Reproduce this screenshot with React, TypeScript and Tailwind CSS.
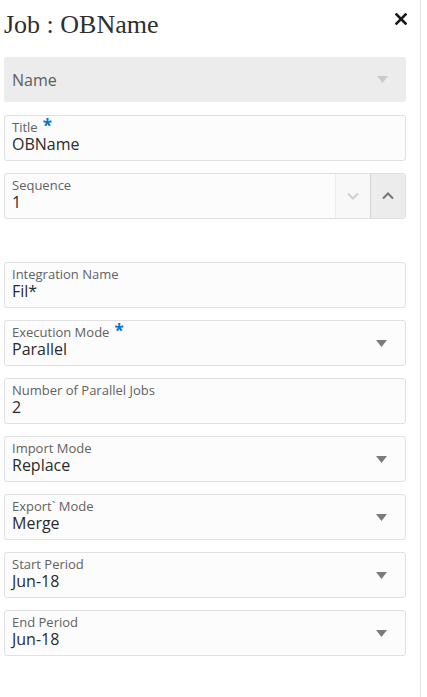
import React from "react";

const sans = { fontFamily: '"Open Sans", "Noto Sans", sans-serif' };

function Caret({ light }: { light?: boolean }) {
  return (
    <svg width="11" height="7" viewBox="0 0 11 7" className="shrink-0">
      <polygon points="0,0 11,0 5.5,7" fill={light ? "#c9c9c9" : "#7b7b7b"} />
    </svg>
  );
}

function Star() {
  return (
    <span className="ml-[5px] inline-block align-top text-[17px] font-bold leading-[11px] text-[#0572ce]">*</span>
  );
}

function Field({
  label,
  value,
  required,
  select,
}: {
  label: string;
  value: string;
  required?: boolean;
  select?: boolean;
}) {
  return (
    <div className="flex h-[46px] items-stretch rounded-[3px] border border-[#e0e0e0] bg-[#fcfcfc]">
      <div className="flex min-w-0 flex-1 flex-col pl-[7px] pt-[4px]">
        <div className="text-[13px] leading-[14px] text-[#626262]">
          {label}
          {required && <Star />}
        </div>
        <div className="text-[16px] leading-[20px] text-[#2b2b2b]">{value}</div>
      </div>
      {select && (
        <div className="flex w-[50px] items-center justify-center pl-[2px]">
          <Caret />
        </div>
      )}
    </div>
  );
}

export default function App() {
  return (
    <div className="flex min-h-[697px] w-[427px] bg-white" style={sans}>
      <div className="w-[421px] border-r border-[#e3e3e3] pb-[40px] pl-[4px] pr-[14px] pt-[10px]">
        <div className="flex items-start justify-between">
          <h1
            className="text-[26px] leading-[30px] text-[#2e2e2e]"
            style={{ fontFamily: '"Liberation Serif", "Times New Roman", serif' }}
          >
            Job : OBName
          </h1>
          <svg width="12" height="12" viewBox="0 0 12 12" className="mr-[-1px] mt-[3px]">
            <path d="M1.5 1.5 L10.5 10.5 M10.5 1.5 L1.5 10.5" stroke="#1a1a1a" strokeWidth="2.6" strokeLinecap="square" />
          </svg>
        </div>

        <div className="mt-[17px] flex flex-col gap-[12px]">
          <div className="flex h-[45px] items-center rounded-[3px] bg-[#ececec] pl-[8px]">
            <div className="flex-1 text-[16px] text-[#5c5c5c]">Name</div>
            <div className="flex w-[50px] items-center justify-center pl-[2px]">
              <Caret light />
            </div>
          </div>

          <div className="mt-[1px]">
            <Field label="Title" value="OBName" required />
          </div>

          <div className="flex h-[46px] items-stretch rounded-[3px] border border-[#e0e0e0] bg-[#fcfcfc]">
            <div className="flex min-w-0 flex-1 flex-col pl-[7px] pt-[4px]">
              <div className="text-[13px] leading-[14px] text-[#626262]">Sequence</div>
              <div className="text-[16px] leading-[20px] text-[#2b2b2b]">1</div>
            </div>
            <div className="flex w-[35px] items-center justify-center border-l border-[#ececec] bg-[#f8f8f8]">
              <svg width="12" height="8" viewBox="0 0 12 8">
                <path d="M1 1.5 L6 6.5 L11 1.5" fill="none" stroke="#cfcfcf" strokeWidth="2" />
              </svg>
            </div>
            <div className="flex w-[35px] items-center justify-center rounded-r-[3px] border-l border-[#d3d3d3] bg-[#ececec]">
              <svg width="12" height="8" viewBox="0 0 12 8">
                <path d="M1 6.5 L6 1.5 L11 6.5" fill="none" stroke="#767676" strokeWidth="2" />
              </svg>
            </div>
          </div>

          <div className="h-[19px]" />

          <Field label="Integration Name" value="Fil*" />
          <Field label="Execution Mode" value="Parallel" required select />
          <Field label="Number of Parallel Jobs" value="2" />
          <Field label="Import Mode" value="Replace" select />
          <Field label="Export` Mode" value="Merge" select />
          <Field label="Start Period" value="Jun-18" select />
          <Field label="End Period" value="Jun-18" select />
        </div>
      </div>
    </div>
  );
}
